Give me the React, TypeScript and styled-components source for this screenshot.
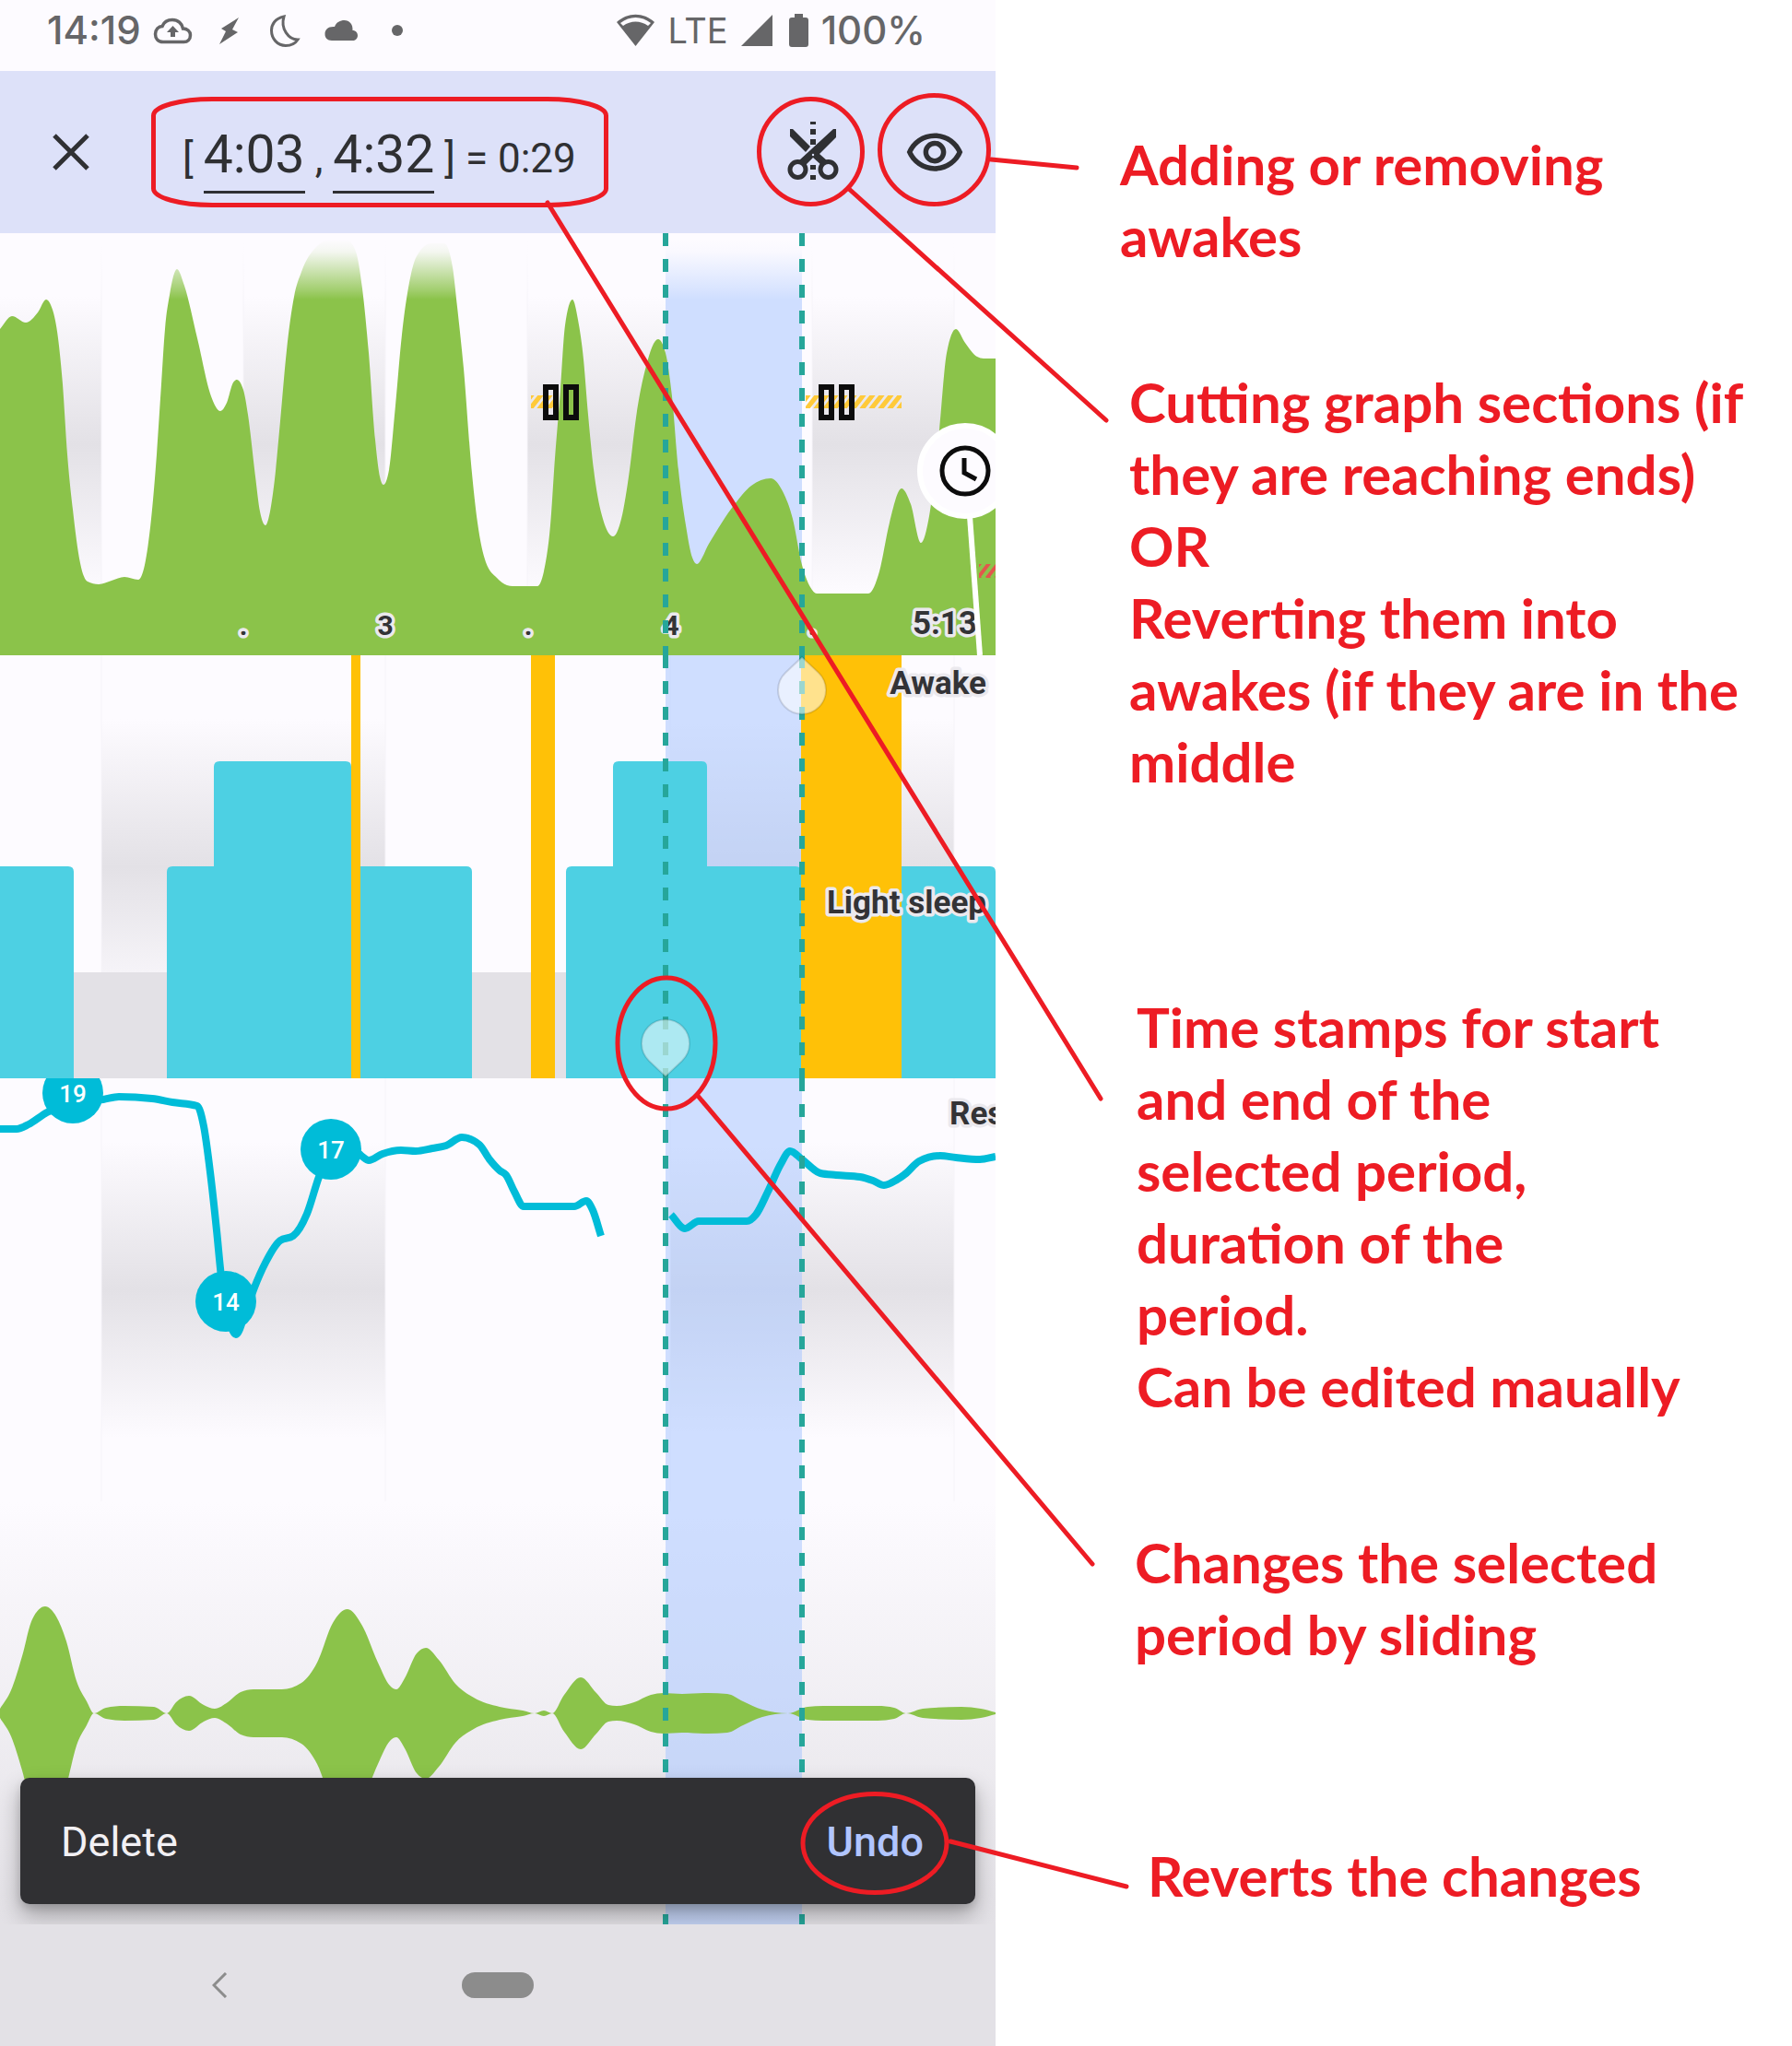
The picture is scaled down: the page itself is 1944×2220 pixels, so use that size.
import React from 'react';
import styled, { createGlobalStyle } from 'styled-components';

const color = {
  surface: '#fdfbff',
  bar: '#dde1f9',
  ink: '#2f3033',
  status: '#666668',
  shade: '#e3e1e6',
  green: '#8bc34a',
  teal: '#26a69a',
  cyan: '#4dd0e3',
  line: '#00bcd8',
  amber: '#ffc107',
  red: '#ed1c24',
};

const GlobalStyle = createGlobalStyle`
  *, *::before, *::after { box-sizing: border-box; }
  body { margin: 0; background: #fff; }
  button, input { font: inherit; color: inherit; }
`;

/* ---------- layout ---------- */

const Page = styled.main`
  position: relative;
  display: grid;
  grid-template-columns: 5fr 4fr;
  align-items: start;
  font-family: Roboto, "Liberation Sans", sans-serif;
  overflow: hidden;
`;

const Phone = styled.section`
  display: flex;
  flex-direction: column;
  min-width: 0;
  background: ${color.surface};
  color: ${color.ink};
`;

const StatusBar = styled.header`
  display: flex;
  justify-content: space-between;
  padding: 9px 76px 20px 51px;
  font-family: Inter, Roboto, sans-serif;
  font-size: 42px;
  font-weight: 500;
  line-height: 48px;
  color: ${color.status};
`;

const StatusGroup = styled.div<{ $gap: number }>`
  display: flex;
  align-items: center;
  gap: ${(p) => p.$gap}px;
`;

const StatusIcon = styled.svg<{ $w: number }>`
  display: block;
  flex: none;
  width: ${(p) => p.$w}px;
  height: 48px;
  fill: ${color.status};
`;

const Network = styled.span`
  font-size: 38px;
  font-weight: 400;
`;

const Toolbar = styled.div`
  display: flex;
  align-items: center;
  min-height: 176px;
  padding: 0 33px 0 44px;
  background: ${color.bar};
`;

const IconButton = styled.button`
  display: flex;
  flex: none;
  padding: 0;
  border: 0;
  background: none;
  cursor: pointer;

  svg {
    display: block;
    width: 66px;
    height: 66px;
    fill: ${color.ink};
  }
`;

const Range = styled.div`
  display: flex;
  flex: 1;
  align-items: baseline;
  gap: 11px;
  padding: 14px 0 0 88px;
  font-size: 44px;
  line-height: 52px;
`;

const TimeInput = styled.input`
  width: 110px;
  height: 76px;
  padding: 0 0 7px;
  border: 0;
  border-bottom: 3px solid ${color.ink};
  border-radius: 0;
  background: none;
  font-size: 57px;
  line-height: 66px;
  outline: none;
`;

const Actions = styled.div`
  display: flex;
  gap: 66px;
`;

const Charts = styled.div`
  position: relative;
  overflow: hidden;
`;

const Chart = styled.svg`
  display: block;
  width: 100%;
  height: auto;
`;

const ChartLabel = styled.text<{ $size: number }>`
  font-family: Roboto, "Liberation Sans", sans-serif;
  font-size: ${(p) => p.$size}px;
  font-weight: 700;
  fill: #333336;
  stroke: #ebe9ee;
  stroke-width: 7px;
  stroke-linejoin: round;
  paint-order: stroke;
`;

const MarkerLabel = styled.text`
  font-family: Roboto, "Liberation Sans", sans-serif;
  font-size: 26px;
  font-weight: 500;
  fill: #fff;
  text-anchor: middle;
`;

const Snackbar = styled.div`
  position: absolute;
  left: 22px;
  right: 22px;
  bottom: 22px;
  display: flex;
  align-items: center;
  justify-content: space-between;
  height: 137px;
  padding: 2px 56px 0 44px;
  border-radius: 10px;
  background: #303033;
  box-shadow: 0 12px 24px rgba(0, 0, 0, 0.3), 0 4px 8px rgba(0, 0, 0, 0.12);
  color: #f2f0f4;
  font-size: 45px;
`;

const UndoButton = styled.button`
  padding: 0;
  border: 0;
  background: none;
  color: #b1c5ff;
  font-weight: 500;
  cursor: pointer;
`;

const NavBar = styled.nav`
  display: grid;
  grid-template-columns: 1fr 78px 1fr;
  align-items: center;
  min-height: 132px;
  background: ${color.shade};
`;

const BackButton = styled.button`
  justify-self: center;
  display: flex;
  padding: 12px 36px 12px 12px;
  border: 0;
  background: none;
  cursor: pointer;
`;

const HomeButton = styled.button`
  height: 28px;
  padding: 0;
  border: 0;
  border-radius: 14px;
  background: #8c8c8c;
  cursor: pointer;
`;

const Notes = styled.aside`
  display: flex;
  flex-direction: column;
  padding-left: 135px;
  color: ${color.red};
  font-family: Lato, "Open Sans", sans-serif;
  font-size: 60px;
  font-weight: 700;
  line-height: 78px;
`;

const Note = styled.p<{ $before: number; $indent: number }>`
  margin: ${(p) => p.$before}px 0 0 ${(p) => p.$indent}px;
  white-space: pre;
`;

const Callouts = styled.svg`
  position: absolute;
  top: 0;
  left: 0;
  width: 100%;
  height: auto;
  fill: none;
  stroke: ${color.red};
  stroke-width: 5px;
  pointer-events: none;
`;

/* ---------- curve helpers ---------- */

type Point = [number, number];

/** Monotone cubic through the points: no overshoot at peaks and valleys. */
function curve(points: Point[], start = 'M'): string {
  const n = points.length;
  const slope = points.slice(1).map((p, i) => (p[1] - points[i][1]) / (p[0] - points[i][0]));
  const tangent = points.map((_, i) => {
    if (i === 0) return slope[0];
    if (i === n - 1) return slope[n - 2];
    const a = slope[i - 1];
    const b = slope[i];
    if (a * b <= 0) return 0;
    const ha = points[i][0] - points[i - 1][0];
    const hb = points[i + 1][0] - points[i][0];
    const mid = (a * hb + b * ha) / (ha + hb);
    return Math.sign(mid) * Math.min(Math.abs(a), Math.abs(b), 0.5 * Math.abs(mid)) * 2;
  });
  let d = `${start}${points[0][0]} ${points[0][1]}`;
  for (let i = 1; i < n; i += 1) {
    const [x0, y0] = points[i - 1];
    const [x1, y1] = points[i];
    const h = (x1 - x0) / 3;
    d += `C${x0 + h} ${y0 + tangent[i - 1] * h} ${x1 - h} ${y1 - tangent[i] * h} ${x1} ${y1}`;
  }
  return d;
}

const movement: Point[] = [
  [0, 357], [13, 343], [28, 350], [41, 339], [50, 325], [57, 336], [63, 367], [68, 417], [73, 493],
  [79, 553], [87, 611], [95, 631], [107, 634], [121, 630], [135, 626], [150, 629], [157, 613],
  [164, 563], [170, 493], [175, 417], [179, 357], [184, 320], [192, 292], [200, 310], [214, 367],
  [229, 430], [239, 446], [246, 437], [253, 415], [257, 412], [264, 423], [269, 450], [277, 517],
  [282, 555], [288, 570], [293, 555], [298, 520], [304, 457], [311, 380], [319, 322], [327, 295],
  [343, 268], [357, 260], [375, 259], [386, 273], [393, 313], [400, 383], [407, 477], [412, 517],
  [416, 526], [422, 510], [429, 440], [436, 363], [443, 312], [452, 278], [468, 264], [482, 264],
  [491, 290], [496, 333], [503, 400], [511, 503], [518, 567], [527, 610], [539, 627], [550, 635],
  [556, 636], [583, 636], [590, 620], [597, 570], [602, 497], [608, 423], [613, 353], [621, 325],
  [627, 347], [633, 390], [638, 450], [645, 517], [654, 563], [665, 582], [674, 563], [683, 510],
  [690, 453], [701, 397], [714, 368], [722, 383], [729, 430], [736, 510], [744, 570], [751, 605],
  [756, 612], [769, 590], [797, 547], [815, 527], [836, 519], [849, 533], [860, 563], [870, 613],
  [879, 637], [886, 644], [942, 644], [954, 620], [965, 567], [978, 530], [988, 547], [999, 589],
  [1008, 560], [1019, 467], [1027, 383], [1037, 357], [1047, 372], [1060, 387], [1067, 389], [1080, 389],
];

const breathingA: Point[] = [
  [0, 1225], [18, 1225], [31, 1220], [51, 1207], [80, 1197], [112, 1193], [129, 1190], [165, 1192],
  [187, 1196], [214, 1200], [221, 1222], [229, 1280], [235, 1335], [240, 1385], [246, 1420], [256, 1448],
  [266, 1425], [276, 1397], [288, 1370], [304, 1346], [318, 1341], [333, 1317], [346, 1277],
  [359, 1247], [382, 1247], [392, 1254], [400, 1259], [415, 1252], [435, 1248], [451, 1249],
  [469, 1246], [484, 1243], [501, 1234], [520, 1242], [531, 1258], [542, 1270], [549, 1275],
  [558, 1293], [568, 1309], [623, 1309], [636, 1303], [643, 1313], [652, 1341],
];

const breathingB: Point[] = [
  [728, 1318], [743, 1333], [758, 1325], [810, 1325], [820, 1318], [833, 1293], [847, 1263],
  [857, 1249], [870, 1258], [890, 1273], [907, 1275], [933, 1277], [947, 1281], [959, 1286],
  [973, 1280], [983, 1273], [997, 1260], [1020, 1254], [1037, 1256], [1063, 1258], [1080, 1255],
];

/* x position and half height of the sound wave */
const noise: Point[] = [
  [0, 5], [12, 25], [24, 62], [35, 102], [49, 116], [61, 105], [72, 78], [83, 35], [94, 13], [102, 0],
  [115, 6], [135, 8], [167, 7], [181, 0], [191, 12], [205, 19], [221, 9], [233, 5], [247, 12],
  [261, 23], [275, 26], [306, 26], [327, 33], [344, 55], [361, 98], [377, 113], [393, 95], [410, 55],
  [423, 30], [430, 26], [439, 38], [452, 65], [462, 71], [476, 58], [494, 32], [514, 17], [542, 7],
  [567, 3], [580, 0], [590, 3], [599, 0], [612, 20], [630, 39], [647, 22], [660, 9], [669, 8],
  [688, 12], [706, 20], [720, 22], [740, 21], [768, 22], [789, 21], [806, 13], [827, 4], [855, 0],
  [876, 7], [893, 8], [952, 8], [970, 6], [983, 0], [1001, 5], [1043, 7], [1064, 5], [1080, 1],
];
const noiseAxis = 1859;
const noiseArea =
  curve(noise.map(([x, a]): Point => [x, noiseAxis - a])) +
  curve(noise.map(([x, a]): Point => [x, noiseAxis + a]).reverse(), 'L') +
  'Z';

/* ---------- chart pieces ---------- */

interface SpanProps {
  top: number;
  height: number;
}

const Selection = ({ top, height }: SpanProps) => (
  <rect x="722" y={top} width="148" height={height} fill="rgb(168, 197, 255)" fillOpacity="0.54" />
);

const Cursors = ({ top, height }: SpanProps) => (
  <g stroke={color.teal} strokeWidth="6" strokeDasharray="14 14">
    <path d={`M722 ${top}v${height}`} />
    <path d={`M870 ${top}v${height}`} />
  </g>
);

const Shades = ({ top, height, bands }: SpanProps & { bands: Point[] }) => (
  <g>
    <defs>
      <linearGradient id={`shade${top}`} x1="0" x2="0" y1="0" y2="1">
        <stop offset="0.15" stopColor={color.shade} stopOpacity="0" />
        <stop offset="0.5" stopColor={color.shade} />
        <stop offset="0.85" stopColor={color.shade} stopOpacity="0" />
      </linearGradient>
    </defs>
    {bands.map(([from, to]) => (
      <g key={from}>
        <rect x={from} y={top} width={to - from} height={height} fill={`url(#shade${top})`} />
        <path d={`M${to} ${top}v${height}`} stroke="#f6f4f9" />
        <path d={`M${from} ${top}v${height}`} stroke="#f6f4f9" />
      </g>
    ))}
  </g>
);

const Pause = ({ x }: { x: number }) => (
  <g fill="none" stroke="#0c0c0c" strokeWidth="6">
    <rect x={x} y="420" width="11" height="33" />
    <rect x={x + 22} y="420" width="11" height="33" />
  </g>
);

const Bar = ({ x, to, y }: { x: number; to: number; y: number }) => (
  <path d={`M${x} 1170V${y + 6}q0 -6 6 -6H${to - 6}q6 0 6 6V1170Z`} fill={color.cyan} />
);

const Marker = ({ x, y, value }: { x: number; y: number; value: number }) => (
  <g>
    <circle cx={x} cy={y} r="33" fill={color.line} />
    <MarkerLabel x={x} y={y + 10}>{value}</MarkerLabel>
  </g>
);

const MovementChart = () => (
  <Chart viewBox="0 253 1080 458" role="img" aria-label="Movement">
    <defs>
      <linearGradient id="fade" x1="0" x2="0" y1="0" y2="1">
        <stop offset="0.1" stopColor={color.surface} />
        <stop offset="0.28" stopColor={color.surface} stopOpacity="0.92" />
        <stop offset="0.54" stopColor={color.surface} stopOpacity="0.6" />
        <stop offset="0.86" stopColor={color.surface} stopOpacity="0.2" />
        <stop offset="1" stopColor={color.surface} stopOpacity="0" />
      </linearGradient>
      <pattern id="hatchAmber" width="10" height="14" patternUnits="userSpaceOnUse" y="429" x="576">
        <path d="M-2 16L12 -2M-12 16L2 -2M8 16L22 -2" stroke="#ffca3a" strokeWidth="5" />
      </pattern>
      <pattern id="hatchRed" width="10" height="14" patternUnits="userSpaceOnUse" y="612" x="1062">
        <path d="M-2 16L12 -2M-12 16L2 -2M8 16L22 -2" stroke="#e2574c" strokeWidth="4" />
      </pattern>
    </defs>
    <Shades top={253} height={458} bands={[[-44, 110], [264, 418], [572, 727], [881, 1035]]} />
    <rect x="722" y="253" width="148" height="458" fill="#cfdeff" />
    <path d={`${curve(movement)}V711H0Z`} fill={color.green} />
    <rect x="0" y="253" width="1080" height="72" fill="url(#fade)" />
    <rect x="576" y="429" width="26" height="14" fill="url(#hatchAmber)" />
    <rect x="874" y="429" width="104" height="14" fill="url(#hatchAmber)" />
    <Pause x={592} />
    <Pause x={891} />
    <rect x="1062" y="612" width="18" height="15" fill="url(#hatchRed)" />
    <ChartLabel $size={30} x="264" y="689" textAnchor="middle">.</ChartLabel>
    <ChartLabel $size={30} x="418" y="689" textAnchor="middle">3</ChartLabel>
    <ChartLabel $size={30} x="573" y="689" textAnchor="middle">.</ChartLabel>
    <ChartLabel $size={30} x="728" y="689" textAnchor="middle">4</ChartLabel>
    <ChartLabel $size={30} x="881" y="689" textAnchor="middle">.</ChartLabel>
    <ChartLabel $size={35} x="1060" y="688" textAnchor="end">5:13</ChartLabel>
    <path d="M1052 560L1063 711" stroke="#fff" strokeWidth="6" />
    <circle cx="1047" cy="511" r="49" fill={color.surface} stroke="#fff" strokeWidth="6" />
    <circle cx="1047" cy="511" r="25" fill="none" stroke="#0c0c0c" strokeWidth="5" />
    <path d="M1046 497V513L1059 520" fill="none" stroke="#0c0c0c" strokeWidth="5" />
    <Cursors top={253} height={458} />
  </Chart>
);

const StagesChart = () => (
  <Chart viewBox="0 711 1080 459" role="img" aria-label="Sleep stages">
    <Shades top={711} height={459} bands={[[110, 418], [727, 1035]]} />
    <Selection top={711} height={459} />
    <path d="M70 1055H190V1170H70ZM500 1055H620V1170H500Z" fill={color.shade} />
    <Bar x={-10} to={80} y={940} />
    <Bar x={181} to={250} y={940} />
    <Bar x={232} to={381} y={826} />
    <path d="M391 1170V940H506q6 0 6 6V1170Z" fill={color.cyan} />
    <Bar x={614} to={869} y={940} />
    <Bar x={665} to={767} y={826} />
    <path d="M978 1170V940H1074q6 0 6 6V1170Z" fill={color.cyan} />
    <path d="M381 711h10v459h-10zM576 711h26v459h-26zM869 711h109v459h-109z" fill={color.amber} />
    <ChartLabel $size={35} x="1070" y="753" textAnchor="end">Awake</ChartLabel>
    <ChartLabel $size={35} x="1070" y="991" textAnchor="end">Light sleep</ChartLabel>
    <Cursors top={711} height={459} />
    <g fill="#fff" fillOpacity="0.54" stroke="#000" strokeOpacity="0.12" strokeWidth="2">
      <path d="M870 713L888 730A26 26 0 1 1 852 730Z" />
      <path d="M722 1168L740 1151A26 26 0 1 0 704 1151Z" />
    </g>
  </Chart>
);

const BreathingChart = () => (
  <Chart viewBox="0 1170 1080 459" role="img" aria-label="Respiratory rate">
    <Shades top={1170} height={459} bands={[[110, 418], [727, 1035]]} />
    <Selection top={1170} height={459} />
    <g fill="none" stroke={color.line} strokeWidth="8" strokeLinejoin="round">
      <path d={curve(breathingA)} />
      <path d={curve(breathingB)} />
    </g>
    <Marker x={79} y={1186} value={19} />
    <Marker x={245} y={1412} value={14} />
    <Marker x={359} y={1247} value={17} />
    <ChartLabel $size={35} x="1030" y="1220">Res</ChartLabel>
    <Cursors top={1170} height={459} />
  </Chart>
);

const NoiseChart = () => (
  <Chart viewBox="0 1629 1080 459" role="img" aria-label="Noise">
    <defs>
      <linearGradient id="noiseShade" x1="0" x2="0" y1="0" y2="1">
        <stop offset="0" stopColor={color.surface} />
        <stop offset="1" stopColor={color.shade} />
      </linearGradient>
    </defs>
    <rect x="0" y="1629" width="1080" height="459" fill="url(#noiseShade)" />
    <Selection top={1629} height={459} />
    <path d={noiseArea} fill={color.green} />
    <Cursors top={1629} height={459} />
  </Chart>
);

/* ---------- icons ---------- */

const CloseIcon = () => (
  <svg viewBox="44 132 66 66" aria-hidden="true">
    <path d="M59 147L95 183M95 147L59 183" stroke={color.ink} strokeWidth="5" />
  </svg>
);

const CutIcon = () => (
  <svg viewBox="849 132 66 66" aria-hidden="true">
    <path d="M879 132h6v3h-6zM879 140h6v6h-6zM879 151h6v6h-6zM879 179h6v5h-6zM879 190h6v5h-6z" />
    <path d="M857 140h3L879 159L874 165L857 148Z" />
    <path d="M904 140h3V149L889 167L898 175L892 180L882 171L873 180L867 174Z" />
    <g fill="none" stroke={color.ink} strokeWidth="5">
      <circle cx="865.5" cy="184" r="8.5" />
      <circle cx="898.5" cy="184" r="8.5" />
    </g>
    <circle cx="882" cy="168" r="1.2" fill={color.bar} />
  </svg>
);

const EyeIcon = () => (
  <svg viewBox="0 -0.5 24 24" aria-hidden="true">
    <path d="M12 6c3.79 0 7.17 2.13 8.82 5.5C19.17 14.87 15.79 17 12 17s-7.17-2.13-8.82-5.5C4.83 8.13 8.21 6 12 6m0-2C7 4 2.73 7.11 1 11.5 2.73 15.89 7 19 12 19s9.27-3.11 11-7.5C21.27 7.11 17 4 12 4zm0 5c1.38 0 2.5 1.12 2.5 2.5S13.38 14 12 14s-2.5-1.12-2.5-2.5S10.62 9 12 9m0-2c-2.48 0-4.5 2.02-4.5 4.5S9.52 16 12 16s4.5-2.02 4.5-4.5S14.48 7 12 7z" />
  </svg>
);

const notes = [
  { before: 139, indent: 0, text: 'Adding or removing\nawakes' },
  {
    before: 102,
    indent: 10,
    text: 'Cutting graph sections (if\nthey are reaching ends)\nOR\nReverting them into\nawakes (if they are in the\nmiddle',
  },
  {
    before: 210,
    indent: 18,
    text: 'Time stamps for start\nand end of the\nselected period,\nduration of the\nperiod.\nCan be edited maually',
  },
  { before: 113, indent: 16, text: 'Changes the selected\nperiod by sliding' },
  { before: 184, indent: 30, text: 'Reverts the changes' },
];

export default function App() {
  return (
    <Page>
      <GlobalStyle />
      <Phone>
        <StatusBar>
          <StatusGroup $gap={4}>
            <time>14:19</time>
            <StatusGroup $gap={0}>
              <StatusIcon $w={61} viewBox="156 9 61 48">
                <path
                  d="M176 45.500C170 45.500 167.500 41 167.500 37C167.500 32 171 28.500 175 28.500C177 23.500 181 21.500 186 21.500C192 21.500 196.500 25.500 197.500 31C202 31 205.500 34 205.500 38C205.500 42.500 202.500 45.500 198.500 45.500Z"
                  fill="none"
                  stroke={color.status}
                  strokeWidth="3.500"
                />
                <path d="M186.500 28L193 35H189V40H184V35H180Z" />
              </StatusIcon>
              <StatusIcon $w={61} viewBox="217 9 61 48">
                <path d="M258 19L239 31L244 34L237 48L257 35L251 32Z" />
              </StatusIcon>
              <StatusIcon $w={61} viewBox="278 9 61 48">
                <path
                  d="M307 18C297 20 293.500 27 293.500 33C293.500 42 300 49.500 309 49.500C315 49.500 319.500 47 322 43C312 43 303 31 307 18Z"
                  fill="none"
                  stroke={color.status}
                  strokeWidth="3"
                />
              </StatusIcon>
              <StatusIcon $w={61} viewBox="339 9 61 48">
                <path d="M359 44C354 44 351.500 41 351.500 37C351.500 32 355 28.500 362 29C364 24 368 22 372.500 22C378 22 382 26 381.500 33C385 33 387 35.500 387 38.500C387 42 384.500 44 381.500 44Z" />
              </StatusIcon>
              <StatusIcon $w={61} viewBox="400 9 61 48">
                <circle cx="430" cy="33" r="6" />
              </StatusIcon>
            </StatusGroup>
          </StatusGroup>
          <StatusGroup $gap={13}>
            <StatusIcon $w={42} viewBox="670 9 42 48">
              <path d="M690.500 50L670 24C682 13 699 13 711 24Z" />
              <path d="M674 25C684 17 697 17 707 25L704 28C696 22 685 22 677 28Z" fill={color.surface} />
            </StatusIcon>
            <Network>LTE</Network>
            <StatusIcon $w={35} viewBox="803 9 35 48">
              <path d="M838 16V50H804Z" />
            </StatusIcon>
            <StatusIcon $w={27} viewBox="853 9 27 48">
              <path d="M864 15h9v4h3q3 0 3 3v26q0 3 -3 3h-15q-3 0 -3 -3v-26q0 -3 3 -3h3z" />
            </StatusIcon>
            <span>100%</span>
          </StatusGroup>
        </StatusBar>

        <Toolbar>
          <IconButton type="button" aria-label="Close">
            <CloseIcon />
          </IconButton>
          <Range>
            <span>[</span>
            <TimeInput aria-label="Start time" defaultValue="4:03" />
            <span>,</span>
            <TimeInput aria-label="End time" defaultValue="4:32" />
            <span>] = 0:29</span>
          </Range>
          <Actions>
            <IconButton type="button" aria-label="Cut">
              <CutIcon />
            </IconButton>
            <IconButton type="button" aria-label="Awake">
              <EyeIcon />
            </IconButton>
          </Actions>
        </Toolbar>

        <Charts>
          <MovementChart />
          <StagesChart />
          <BreathingChart />
          <NoiseChart />
          <Snackbar role="status">
            <span>Delete</span>
            <UndoButton type="button">Undo</UndoButton>
          </Snackbar>
        </Charts>

        <NavBar>
          <BackButton type="button" aria-label="Back">
            <svg width="17" height="28" viewBox="0 0 17 28" aria-hidden="true">
              <path d="M15 1L2 14L15 27" fill="none" stroke="#8c8c8c" strokeWidth="3" />
            </svg>
          </BackButton>
          <HomeButton type="button" aria-label="Home" />
        </NavBar>
      </Phone>

      <Notes>
        {notes.map((note) => (
          <Note key={note.text} $before={note.before} $indent={note.indent}>
            {note.text}
          </Note>
        ))}
      </Notes>

      <Callouts viewBox="0 0 1944 2220" aria-hidden="true">
        <rect x="166.500" y="107.500" width="491" height="115" rx="64" ry="18" />
        <ellipse cx="879.500" cy="164.500" rx="56" ry="57" />
        <ellipse cx="1013.500" cy="162.500" rx="59" ry="59" />
        <ellipse cx="723" cy="1132" rx="53" ry="71" />
        <ellipse cx="949" cy="2000" rx="78" ry="53.500" />
        <g strokeLinecap="round">
          <path d="M1075 173L1168 182" />
          <path d="M921 205L1200 456" />
          <path d="M594 220L1194 1192" />
          <path d="M757 1189L1185 1697" />
          <path d="M1031 1998L1222 2047" />
        </g>
      </Callouts>
    </Page>
  );
}
